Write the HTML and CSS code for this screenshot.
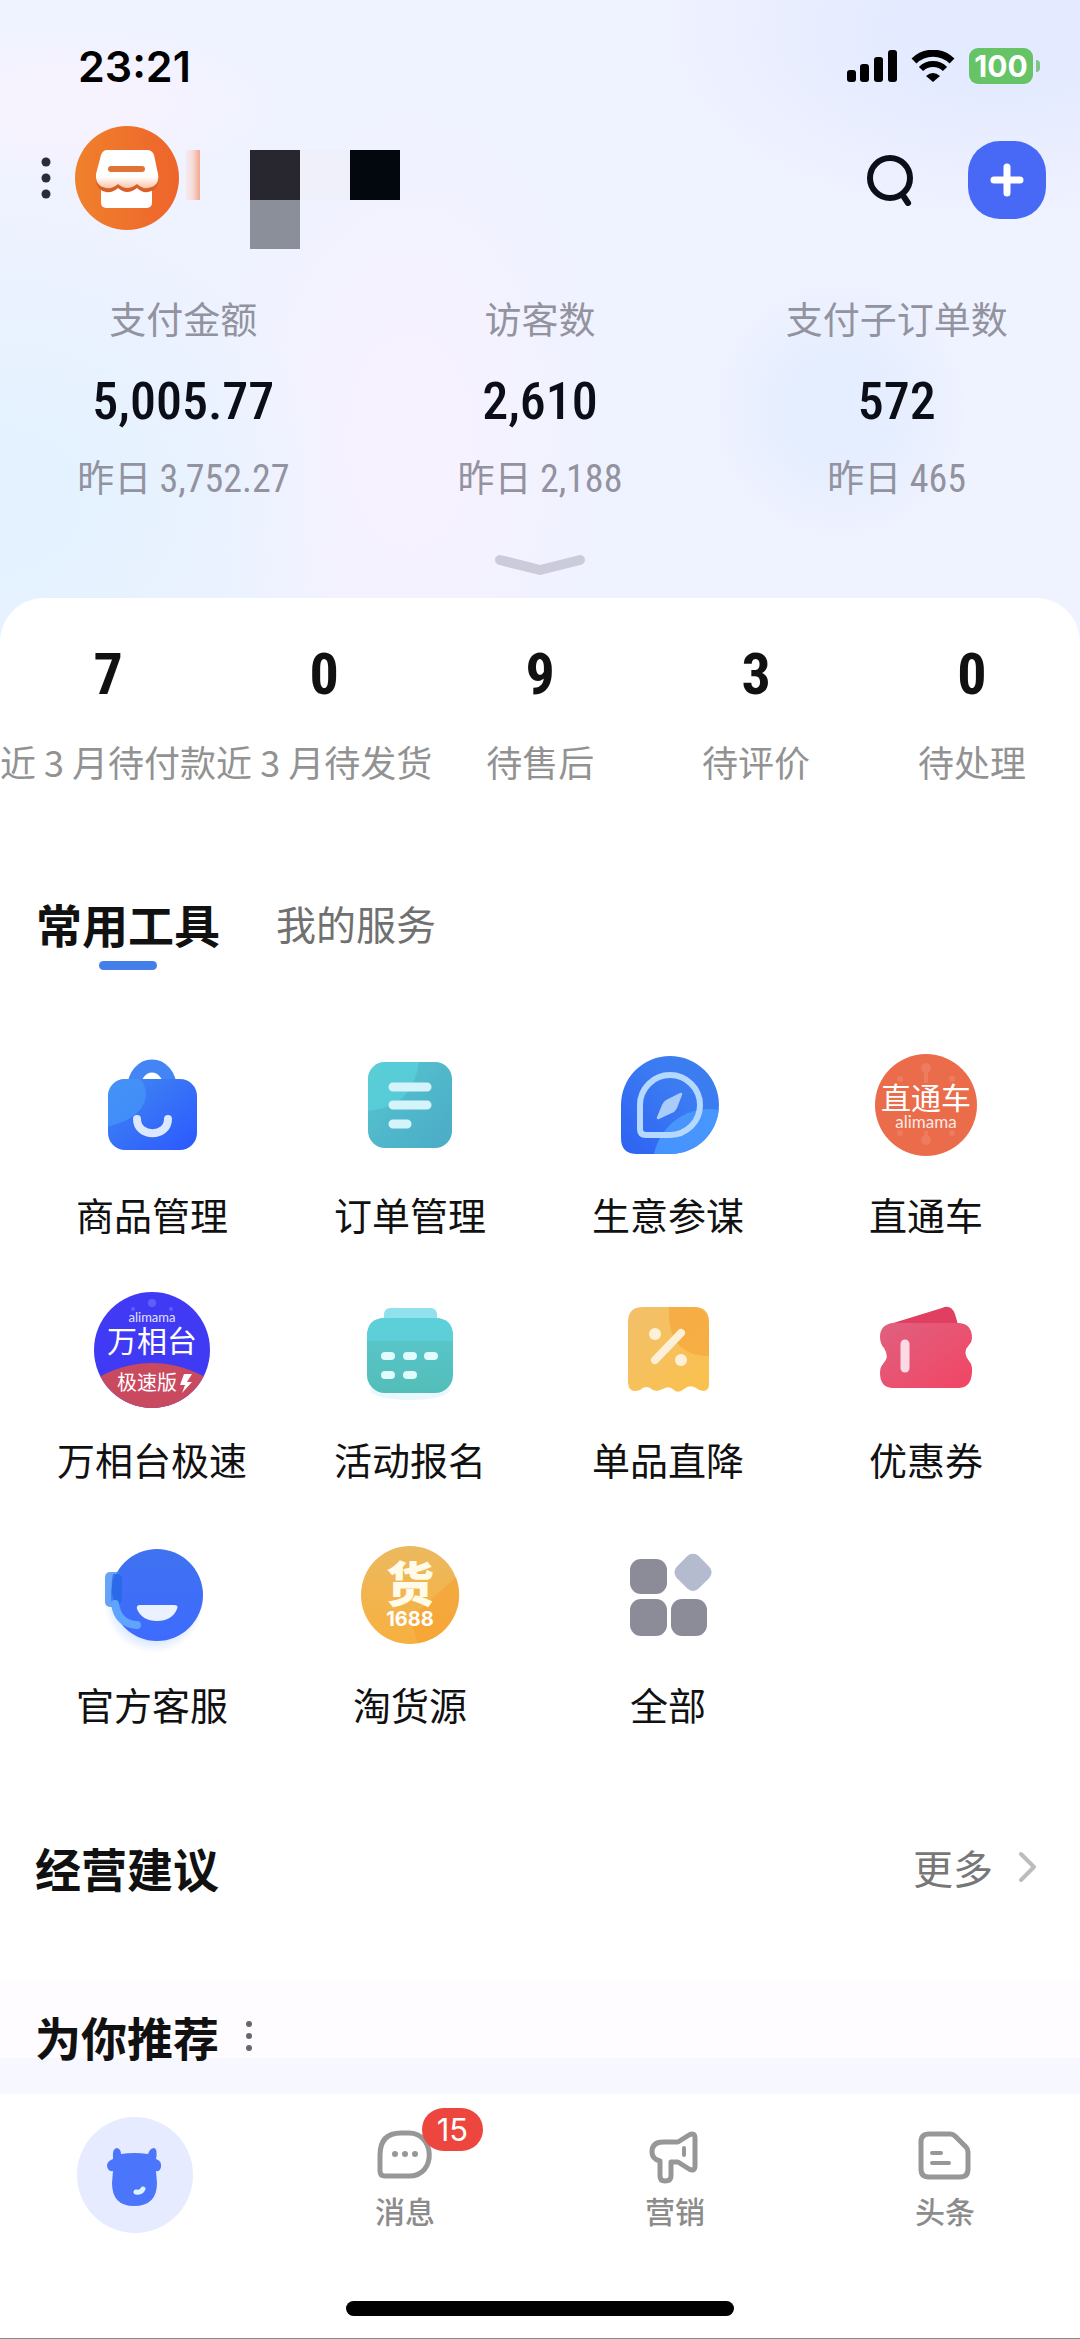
FILE: index.html
```html
<!DOCTYPE html>
<html lang="zh-CN">
<head>
  <meta charset="utf-8">
  <meta name="viewport" content="width=device-width, initial-scale=1">
  <title>工作台</title>
  <link rel="stylesheet" href="styles.css">
</head>
<body>
  <header class="hero">
    <div class="status-bar">
      <span class="time">23:21</span>
      <div class="status-icons">
        <svg width="50" height="32" viewBox="0 0 50 32">
          <rect x="0" y="20" width="9" height="12" rx="3"/>
          <rect x="13" y="14" width="9" height="18" rx="3"/>
          <rect x="27" y="7" width="9" height="25" rx="3"/>
          <rect x="41" y="0" width="9" height="32" rx="3"/>
        </svg>
        <svg width="44" height="32" viewBox="0 0 44 32">
          <path d="M3 11A27 27 0 0 1 41 11" fill="none" stroke="#000" stroke-width="7"/>
          <path d="M10 19A17 17 0 0 1 34 19" fill="none" stroke="#000" stroke-width="6"/>
          <path d="M15 26Q22 20 29 26L22 32z"/>
        </svg>
        <div class="battery">100</div>
      </div>
    </div>

    <div class="top-bar">
      <button class="icon-btn" aria-label="菜单">
        <svg width="10" height="42" viewBox="0 0 10 42" fill="#2c2c38">
          <circle cx="5" cy="5" r="4.5"/><circle cx="5" cy="21" r="4.5"/><circle cx="5" cy="37" r="4.5"/>
        </svg>
      </button>
      <svg class="avatar" width="104" height="104" viewBox="0 0 104 104">
        <defs>
          <linearGradient id="orange" x1="0" x2="1"><stop offset="0" stop-color="#f0802c"/><stop offset="1" stop-color="#ee642b"/></linearGradient>
          <linearGradient id="awning" x1="0" y1="0" x2="0" y2="1"><stop offset=".7" stop-color="#fff"/><stop offset="1" stop-color="#fbc3a6"/></linearGradient>
        </defs>
        <circle cx="52" cy="52" r="52" fill="url(#orange)"/>
        <rect x="26" y="56" width="51" height="26" rx="5" fill="#fff"/>
        <path d="M32 24H72Q77 24 79 29L83 48Q85 62 73 64Q67 65 62 60Q52 68 43 60Q38 65 31 64Q20 62 21 48L26 29Q28 24 32 24z" fill="#d95f28" transform="translate(0 2)"/>
        <path d="M32 24H72Q77 24 79 29L83 48Q85 60 73 62Q67 63 62 58Q52 66 43 58Q38 63 31 62Q20 60 21 48L26 29Q28 24 32 24z" fill="url(#awning)"/>
        <rect x="33" y="40" width="37" height="6" rx="3" fill="#e07438"/>
      </svg>
      <svg class="shop-name" width="216" height="104" viewBox="0 0 216 104">
        <defs>
          <linearGradient id="sliver" x1="0" x2="1"><stop offset="0" stop-color="#f3eef5"/><stop offset=".5" stop-color="#f6dcd8"/><stop offset="1" stop-color="#f3a791"/></linearGradient>
        </defs>
        <rect x="0" y="24" width="15" height="50" fill="url(#sliver)"/>
        <rect x="65" y="24" width="50" height="50" fill="#282730"/>
        <rect x="65" y="74" width="50" height="49" fill="#8b8f99"/>
        <rect x="115" y="24" width="50" height="50" fill="#f0f0fa"/>
        <rect x="165" y="24" width="50" height="50" fill="#03070e"/>
      </svg>
      <button class="icon-btn search" aria-label="搜索">
        <svg width="48" height="52" viewBox="0 0 48 52" fill="none" stroke="#0b0f18" stroke-width="6" stroke-linecap="round">
          <circle cx="24" cy="24" r="20"/><path d="M38 43L42 49"/>
        </svg>
      </button>
      <button class="add-btn" aria-label="新增">
        <svg width="34" height="34" viewBox="0 0 34 34" stroke="#fff" stroke-width="7" stroke-linecap="round">
          <path d="M17 4V30M4 17H30"/>
        </svg>
      </button>
    </div>

    <div class="stats">
      <div class="stat">
        <span class="stat-label">支付金额</span>
        <span class="stat-value">5,005.77</span>
        <span class="stat-prev">昨日 <span class="num">3,752.27</span></span>
      </div>
      <div class="stat">
        <span class="stat-label">访客数</span>
        <span class="stat-value">2,610</span>
        <span class="stat-prev">昨日 <span class="num">2,188</span></span>
      </div>
      <div class="stat">
        <span class="stat-label">支付子订单数</span>
        <span class="stat-value">572</span>
        <span class="stat-prev">昨日 <span class="num">465</span></span>
      </div>
    </div>
    <button class="expand" aria-label="展开">
      <svg width="92" height="30" viewBox="0 0 92 30" fill="none" stroke="#cccbdb" stroke-width="10" stroke-linecap="round" stroke-linejoin="round">
        <path d="M6 10L46 20L86 10"/>
      </svg>
    </button>
  </header>

  <main class="sheet">
    <div class="todos">
      <a class="todo" href="#"><span class="todo-num">7</span><span class="todo-label">近 3 月待付款</span></a>
      <a class="todo" href="#"><span class="todo-num">0</span><span class="todo-label">近 3 月待发货</span></a>
      <a class="todo" href="#"><span class="todo-num">9</span><span class="todo-label">待售后</span></a>
      <a class="todo" href="#"><span class="todo-num">3</span><span class="todo-label">待评价</span></a>
      <a class="todo" href="#"><span class="todo-num">0</span><span class="todo-label">待处理</span></a>
    </div>

    <div class="tabs">
      <button class="tab active">常用工具</button>
      <button class="tab">我的服务</button>
    </div>

    <div class="tools">
      <a class="tool" href="#">
        <svg class="tool-icon" viewBox="0 0 116 116">
          <defs>
            <linearGradient id="bag" x1="0" y1="0" x2="1" y2="1"><stop offset="0" stop-color="#4189f0"/><stop offset="1" stop-color="#2b58ff"/></linearGradient>
            <clipPath id="bagClip"><rect x="14" y="32" width="89" height="71" rx="17"/></clipPath>
          </defs>
          <path d="M40 40A18 21 0 0 1 76 40" fill="none" stroke="#4385f5" stroke-width="13"/>
          <rect x="14" y="32" width="89" height="71" rx="17" fill="url(#bag)"/>
          <path d="M0 82Q50 75 52 48Q52 38 46 32V0H0z" fill="#4799fa" opacity=".65" clip-path="url(#bagClip)"/>
          <path d="M43 72C43 91 74 91 74 72" fill="none" stroke="#dbe8ff" stroke-width="8" stroke-linecap="round"/>
        </svg>
        <span>商品管理</span>
      </a>
      <a class="tool" href="#">
        <svg class="tool-icon" viewBox="0 0 116 116">
          <defs>
            <linearGradient id="order" x1="0" y1="0" x2="1" y2="1"><stop offset="0" stop-color="#56c5cf"/><stop offset="1" stop-color="#4babc7"/></linearGradient>
            <clipPath id="orderClip"><rect x="16" y="15" width="84" height="86" rx="17"/></clipPath>
          </defs>
          <rect x="16" y="15" width="84" height="86" rx="17" fill="url(#order)"/>
          <path d="M0 64Q60 68 67 15V0H0z" fill="#5bd6dd" opacity=".6" clip-path="url(#orderClip)"/>
          <path d="M41 40H75M41 58H75M41 77H55" stroke="#d5f3fb" stroke-width="9" stroke-linecap="round"/>
        </svg>
        <span>订单管理</span>
      </a>
      <a class="tool" href="#">
        <svg class="tool-icon" viewBox="0 0 116 116">
          <defs>
            <linearGradient id="compass" x1="1" y1="0" x2="0" y2="1"><stop offset="0" stop-color="#3c80ee"/><stop offset=".4" stop-color="#3b7bf2"/><stop offset="1" stop-color="#2d62f2"/></linearGradient>
            <clipPath id="compassClip"><path d="M60 9A49 49 0 0 1 60 107H27Q11 107 11 91V58A49 49 0 0 1 60 9z"/></clipPath>
          </defs>
          <path d="M60 9A49 49 0 0 1 60 107H27Q11 107 11 91V58A49 49 0 0 1 60 9z" fill="url(#compass)"/>
          <circle cx="99" cy="118" r="56" fill="#4b9dff" opacity=".8" clip-path="url(#compassClip)"/>
          <path d="M60 28A30 30 0 0 1 60 88H36Q30 88 30 82V58A30 30 0 0 1 60 28z" fill="none" stroke="#b5d8ff" stroke-width="6"/>
          <path d="M70 46Q73 45 72 48L67 61Q66 63 64 65L49 72Q46 73 47 70L52 58Q53 55 56 53z" fill="#a9ccfb"/>
        </svg>
        <span>生意参谋</span>
      </a>
      <a class="tool" href="#">
        <svg class="tool-icon" viewBox="0 0 116 116">
          <circle cx="58" cy="58" r="51" fill="#ea6c4b"/>
          <g fill="#f08b70" opacity=".5">
            <circle cx="58" cy="21" r="5"/><circle cx="32" cy="32" r="3"/><circle cx="84" cy="32" r="3"/>
            <circle cx="58" cy="93" r="5"/><circle cx="32" cy="86" r="3"/><circle cx="84" cy="86" r="3"/>
            <path d="M56 24H60V36H56zM56 84H60V94H56z"/>
          </g>
          <text class="logo-cn" x="58" y="62" font-size="30">直通车</text>
          <text class="logo-en" x="58" y="81" font-size="17">alimama</text>
        </svg>
        <span>直通车</span>
      </a>
      <a class="tool" href="#">
        <svg class="tool-icon" viewBox="0 0 116 116">
          <defs><clipPath id="wxtClip"><circle cx="58" cy="58" r="58"/></clipPath></defs>
          <circle cx="58" cy="58" r="58" fill="#403af5"/>
          <g fill="#625dfa"><circle cx="58" cy="11" r="4"/><circle cx="39" cy="17" r="2"/><circle cx="77" cy="17" r="2"/></g>
          <path d="M0 88Q28 71 58 71Q88 71 116 88V116H0z" fill="#c9495f" clip-path="url(#wxtClip)"/>
          <text class="logo-en" x="58" y="30" font-size="13">alimama</text>
          <text class="logo-cn" x="58" y="60" font-size="30">万相台</text>
          <text class="logo-cn" x="53" y="98" font-size="20">极速版</text>
          <path d="M90 82L86 93H91L88 101L98 90H93L98 82z" fill="#fff"/>
        </svg>
        <span>万相台极速</span>
      </a>
      <a class="tool" href="#">
        <svg class="tool-icon" viewBox="0 0 116 116">
          <defs>
            <linearGradient id="event" x1="0" y1="0" x2="0" y2="1"><stop offset="0" stop-color="#5ac8cf"/><stop offset="1" stop-color="#53bdb8"/></linearGradient>
          </defs>
          <ellipse cx="58" cy="98" rx="40" ry="10" fill="#e8f8fc"/>
          <rect x="32" y="16" width="53" height="24" rx="6" fill="#91e0ed"/>
          <rect x="15" y="26" width="86" height="75" rx="18" fill="url(#event)"/>
          <path d="M15 49V44Q15 26 33 26H83Q101 26 101 44V49z" fill="#5dcfd9"/>
          <path d="M33 64H39M55 64H61M76 64H82M33 83H39M55 83H61" stroke="#e0fcfc" stroke-width="8" stroke-linecap="round"/>
        </svg>
        <span>活动报名</span>
      </a>
      <a class="tool" href="#">
        <svg class="tool-icon" viewBox="0 0 116 116">
          <defs>
            <linearGradient id="gold" x1="0" y1="0" x2="1" y2="1"><stop offset="0" stop-color="#f2c06b"/><stop offset="1" stop-color="#fbc14c"/></linearGradient>
            <clipPath id="goldClip"><rect x="18" y="15" width="81" height="85" rx="15"/></clipPath>
          </defs>
          <path d="M33 15H84Q99 15 99 30V92Q99 99 93 99Q90 99 86 96Q80 92 74 97Q68 102 64 98Q59 93 53 97L47 99Q43 99 40 96Q35 93 30 98Q19 102 18 91V30Q18 15 33 15z" fill="url(#gold)"/>
          <path d="M59 0V27Q62 64 99 64H116V0z" fill="#f6a53b" opacity=".7" clip-path="url(#goldClip)"/>
          <path d="M45 68L71 41" stroke="#fdf0d8" stroke-width="8" stroke-linecap="round"/>
          <circle cx="45" cy="42" r="6" fill="#fdf0d8"/><circle cx="71" cy="68" r="6" fill="#fdf0d8"/>
        </svg>
        <span>单品直降</span>
      </a>
      <a class="tool" href="#">
        <svg class="tool-icon" viewBox="0 0 116 116">
          <defs>
            <linearGradient id="coupon" x1="0" y1="0" x2="1" y2="1"><stop offset="0" stop-color="#e0607f"/><stop offset="1" stop-color="#f24564"/></linearGradient>
          </defs>
          <path d="M22 32L74 16Q83 12 87 22L91 36H28z" fill="#e03f62"/>
          <path d="M24 31H91Q104 32 104 46Q104 50 101 53Q94 60 101 69Q104 72 104 76Q105 95 91 96H24Q12 95 12 81Q12 75 15 72Q22 65 16 56Q12 52 12 45Q12 33 24 31z" fill="url(#coupon)"/>
          <path d="M37 52V76" stroke="#fbdbe3" stroke-width="9" stroke-linecap="round"/>
        </svg>
        <span>优惠券</span>
      </a>
      <a class="tool" href="#">
        <svg class="tool-icon" viewBox="0 0 116 116">
          <defs>
            <linearGradient id="service" x1="0" y1="0" x2="0" y2="1"><stop offset="0" stop-color="#3f72f0"/><stop offset="1" stop-color="#3e6bff"/></linearGradient>
            <radialGradient id="serviceShadow"><stop offset=".7" stop-color="#d5e4ff"/><stop offset="1" stop-color="#fff"/></radialGradient>
          </defs>
          <circle cx="60" cy="66" r="50" fill="url(#serviceShadow)"/>
          <circle cx="63" cy="58" r="46" fill="url(#service)"/>
          <rect x="11" y="35" width="17" height="35" rx="5" fill="#3685f5" opacity=".75"/>
          <path d="M19 37H24Q28 37 28 41V62Q28 69 22 69Q15 54 19 37z" fill="#2460e6" opacity=".7"/>
          <path d="M21 67Q24 87 43 88" fill="none" stroke="#5fa5ff" stroke-width="8" stroke-linecap="round"/>
          <path d="M46 68H80Q85 68 83 72Q78 84 63 84Q48 84 43 72Q42 68 46 68z" fill="#ebf2ff"/>
        </svg>
        <span>官方客服</span>
      </a>
      <a class="tool" href="#">
        <svg class="tool-icon" viewBox="0 0 116 116">
          <defs>
            <linearGradient id="source" x1="0" y1="0" x2="0" y2="1"><stop offset="0" stop-color="#ecb95f"/><stop offset="1" stop-color="#f7b03f"/></linearGradient>
          </defs>
          <circle cx="58" cy="58" r="49" fill="url(#source)"/>
          <path d="M58 82L104 40A49 49 0 0 1 66 106z" fill="#f59f2f" opacity=".55"/>
          <text class="logo-cn logo-heavy" x="58" y="65" font-size="48">货</text>
          <text class="logo-num" x="58" y="89" font-size="20">1688</text>
        </svg>
        <span>淘货源</span>
      </a>
      <a class="tool" href="#">
        <svg class="tool-icon" viewBox="0 0 116 116" fill="#8c8c99">
          <rect x="20" y="22" width="37" height="35" rx="11"/>
          <rect x="20" y="62" width="37" height="37" rx="11"/>
          <rect x="61" y="62" width="36" height="37" rx="11"/>
          <rect x="67" y="20" width="31" height="31" rx="8" fill="#b5bbcf" transform="rotate(45 83 36)"/>
        </svg>
        <span>全部</span>
      </a>
    </div>

    <section class="advice">
      <h2>经营建议</h2>
      <a class="more" href="#">更多
        <svg width="18" height="32" viewBox="0 0 18 32" fill="none" stroke="#bcbcbc" stroke-width="4" stroke-linecap="round" stroke-linejoin="round"><path d="M2 3L15 16L2 29"/></svg>
      </a>
    </section>

    <section class="recommend">
      <h2>为你推荐</h2>
      <svg width="8" height="32" viewBox="0 0 8 32" fill="#66666f"><circle cx="4" cy="4" r="3"/><circle cx="4" cy="16" r="3"/><circle cx="4" cy="28" r="3"/></svg>
    </section>
  </main>

  <footer class="bottom">
    <nav class="nav">
      <a class="nav-item home" href="#" aria-label="首页">
        <svg width="116" height="116" viewBox="0 0 116 116">
          <circle cx="58" cy="58" r="58" fill="#e7ebff"/>
          <path d="M36 42Q35 31 40 31Q44 32 44 37Q57 35 71 37Q73 31 77 31Q81 32 79 42Q85 44 84 50Q83 55 79 54L80 66Q80 89 57 89Q35 89 35 66L36 54Q31 55 30 49Q30 44 36 42z" fill="#4b76fb"/>
          <path d="M59 75Q64 76 66 72" fill="none" stroke="#dcf3ff" stroke-width="5" stroke-linecap="round"/>
        </svg>
      </a>
      <a class="nav-item" href="#">
        <span class="nav-icon">
          <svg width="56" height="56" viewBox="0 0 56 56" fill="none" stroke="#979797" stroke-width="5">
            <path d="M24 5H32C58 5 60 48 32 48H8Q3 48 3 43V27Q3 5 24 5z"/>
            <g fill="#979797" stroke="none"><circle cx="18" cy="26" r="3"/><circle cx="28" cy="26" r="3"/><circle cx="38" cy="26" r="3"/></g>
          </svg>
          <span class="badge">15</span>
        </span>
        <span class="nav-label">消息</span>
      </a>
      <a class="nav-item" href="#">
        <span class="nav-icon">
          <svg width="56" height="56" viewBox="0 0 56 56" fill="none" stroke="#979797" stroke-width="5" stroke-linejoin="round" stroke-linecap="round">
            <path d="M16 14H31L42 7Q48 4 48 10V38Q48 44 42 41L31 34H24V48Q24 53 18 53Q13 53 13 48V33Q5 31 5 24Q5 14 16 14z"/>
            <path d="M37 20V27" stroke-width="4"/>
          </svg>
        </span>
        <span class="nav-label">营销</span>
      </a>
      <a class="nav-item" href="#">
        <span class="nav-icon">
          <svg width="56" height="56" viewBox="0 0 56 56" fill="none" stroke="#979797" stroke-width="5" stroke-linejoin="round" stroke-linecap="round">
            <path d="M12 6H33Q36 6 38 8L49 19Q51 21 51 24V41Q51 49 43 49H12Q4 49 4 41V14Q4 6 12 6z"/>
            <path d="M15 25H24M15 35H32" stroke-width="4"/>
          </svg>
        </span>
        <span class="nav-label">头条</span>
      </a>
    </nav>
    <div class="home-indicator"></div>
  </footer>
</body>
</html>
```
FILE: styles.css
```css
* {
  box-sizing: border-box;
}
body {
  margin: 0;
  min-height: 100vh;
  display: flex;
  flex-direction: column;
  font-family: "Noto Sans CJK SC", sans-serif;
  color: #111;
  background-color: #eff2ff;
  background-image:
    radial-gradient(ellipse 340px 300px at 0 500px, #e4f2ff 20%, transparent),
    radial-gradient(circle 130px at 840px 410px, #e5eeff 40%, transparent),
    radial-gradient(ellipse 340px 190px at 1000px 30px, #e4eaff 30%, transparent),
    radial-gradient(ellipse 200px 340px at 410px 440px, #f6f2ff 30%, transparent),
    radial-gradient(ellipse 220px 80px at 60px 105px, #f6f3ff 40%, transparent);
}
button {
  font: inherit;
  border: none;
  padding: 0;
  background: none;
  cursor: pointer;
}
a {
  color: inherit;
  text-decoration: none;
}
svg {
  display: block;
  flex: none;
}
h2 {
  margin: 0;
  font-size: 46px;
  line-height: 56px;
  font-weight: 700;
}

/* status bar */
.status-bar {
  display: flex;
  justify-content: space-between;
  align-items: center;
  height: 94px;
  padding: 38px 47px 0 78px;
}
.time {
  font-family: Inter, sans-serif;
  font-size: 43px;
  font-weight: 600;
  color: #000;
}
.status-icons {
  display: flex;
  align-items: center;
  gap: 14px;
}
.battery {
  position: relative;
  width: 64px;
  height: 36px;
  border-radius: 9px;
  background-color: #66c466;
  color: #fff;
  font-family: Inter, sans-serif;
  font-size: 30px;
  font-weight: 700;
  line-height: 36px;
  text-align: center;
}
.battery::after {
  content: "";
  position: absolute;
  right: -7px;
  top: 12px;
  width: 4px;
  height: 12px;
  border-radius: 0 6px 6px 0;
  background-color: #7fc489;
}

/* shop header */
.top-bar {
  display: flex;
  align-items: center;
  margin-top: 32px;
  padding: 0 34px 0 41px;
  height: 104px;
}
.avatar {
  margin-left: 24px;
}
.shop-name {
  margin-left: 6px;
  overflow: visible;
}
.search {
  margin: 4px 0 0 auto;
}
.add-btn {
  display: flex;
  align-items: center;
  justify-content: center;
  width: 78px;
  height: 78px;
  margin: 4px 0 0 54px;
  border-radius: 32px;
  background-color: #4769f5;
}

/* today's numbers */
.stats {
  display: grid;
  grid-template-columns: repeat(3, 1fr);
  margin-top: 66px;
  padding: 0 5px;
}
.stat {
  display: flex;
  flex-direction: column;
  align-items: center;
}
.stat-label,
.stat-prev {
  height: 44px;
  font-size: 37px;
  line-height: 44px;
  color: #92939f;
}
.stat-prev {
  margin-top: 22px;
}
.stat-value {
  margin-top: 32px;
  font-family: "Roboto Condensed", Roboto, sans-serif;
  font-size: 52px;
  line-height: 60px;
  font-weight: 500;
  color: #0b0e16;
}
.num {
  font-family: "Roboto Condensed", Roboto, sans-serif;
  font-size: 38px;
}
.expand {
  display: block;
  margin: 52px auto 18px;
}

/* white sheet */
.sheet {
  flex: 1;
  padding-top: 46px;
  border-radius: 44px 44px 0 0;
  background-color: #fff;
}
.todos {
  display: grid;
  grid-template-columns: repeat(5, 1fr);
}
.todo {
  display: flex;
  flex-direction: column;
  align-items: center;
  gap: 35px;
}
.todo-num {
  font-family: "Roboto Condensed", Roboto, sans-serif;
  font-size: 58px;
  line-height: 60px;
  font-weight: 700;
}
.todo-label {
  font-size: 36px;
  line-height: 44px;
  color: #929292;
  white-space: nowrap;
}

.tabs {
  display: flex;
  gap: 56px;
  margin-top: 112px;
  padding: 0 36px;
}
.tab {
  display: flex;
  flex-direction: column;
  align-items: center;
  font-size: 40px;
  line-height: 56px;
  color: #707070;
}
.tab.active {
  font-size: 46px;
  font-weight: 700;
  color: #111;
}
.tab.active::after {
  content: "";
  width: 58px;
  height: 9px;
  margin-top: 10px;
  border-radius: 5px;
  background-color: #447eea;
}

.tools {
  display: grid;
  grid-template-columns: repeat(4, 1fr);
  row-gap: 55px;
  margin-top: 77px;
  padding: 0 25px 0 23px;
}
.tool {
  display: flex;
  flex-direction: column;
  align-items: center;
  gap: 28px;
  font-size: 38px;
  line-height: 46px;
}
.tool-icon {
  width: 116px;
  height: 116px;
}
.logo-cn,
.logo-en,
.logo-num {
  fill: #fff;
  text-anchor: middle;
}
.logo-en {
  font-family: Lato, sans-serif;
  opacity: .85;
}
.logo-heavy {
  font-weight: 900;
  fill: #fffbe8;
}
.logo-num {
  font-family: Inter, sans-serif;
  font-weight: 700;
}

.advice {
  display: flex;
  justify-content: space-between;
  align-items: center;
  margin-top: 112px;
  padding: 0 43px 0 35px;
}
.more {
  display: flex;
  align-items: center;
  gap: 26px;
  font-size: 40px;
  line-height: 56px;
  color: #777;
}
.recommend {
  display: flex;
  align-items: center;
  gap: 26px;
  margin-top: 85px;
  padding: 28px 35px 30px;
  background: linear-gradient(#fefcff 78px, #f7f7ff 78px);
}

/* bottom navigation */
.bottom {
  background-color: #fff;
  border-bottom: 1px solid #8a8a8a;
}
.nav {
  display: grid;
  grid-template-columns: repeat(4, 1fr);
  padding-top: 23px;
}
.nav-item {
  display: flex;
  flex-direction: column;
  align-items: center;
  gap: 8px;
  padding-top: 11px;
}
.nav-item.home {
  padding-top: 0;
}
.nav-icon {
  position: relative;
}
.nav-label {
  font-size: 30px;
  line-height: 36px;
  font-weight: 500;
  color: #8c8c8c;
}
.badge {
  position: absolute;
  left: 45px;
  top: -20px;
  width: 61px;
  height: 43px;
  border-radius: 22px;
  background-color: #ec463e;
  color: #fff;
  font-family: Inter, sans-serif;
  font-size: 31px;
  line-height: 43px;
  text-align: center;
}
.home-indicator {
  width: 36%;
  height: 15px;
  margin: 68px auto 22px;
  border-radius: 8px;
  background-color: #000;
}
```
